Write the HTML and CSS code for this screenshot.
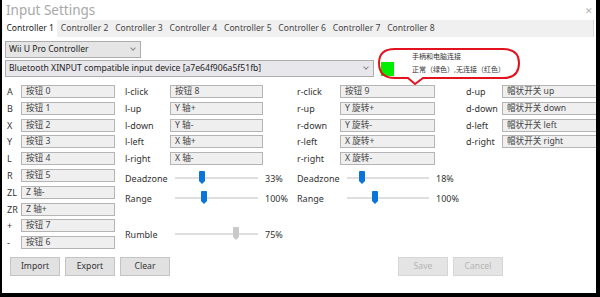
FILE: index.html
```html
<!DOCTYPE html>
<html lang="zh">
<head>
    <meta charset="UTF-8">
    <title>Input Settings</title>
    <link rel="stylesheet" href="styles.css">
</head>
<body>

<div class="window">
    <div class="titlebar">
        <span class="title">Input Settings</span>
        <span class="close">&#x2715;</span>
    </div>

    <!-- controller tabs -->
    <div class="tabs">
        <span class="tab active">Controller 1</span>
        <span class="tab">Controller 2</span>
        <span class="tab">Controller 3</span>
        <span class="tab">Controller 4</span>
        <span class="tab">Controller 5</span>
        <span class="tab">Controller 6</span>
        <span class="tab">Controller 7</span>
        <span class="tab">Controller 8</span>
    </div>

    <div class="content">
        <div class="select type-select">Wii U Pro Controller<span class="chevron"></span></div>
        <div class="device-row">
            <div class="select device-select">Bluetooth XINPUT compatible input device [a7e64f906a5f51fb]<span class="chevron"></span></div>
            <span class="status"></span>
        </div>

        <div class="mapping">
            <!-- buttons -->
            <div class="buttons-col">
                <label>A</label><div class="field">按钮 0</div>
                <label>B</label><div class="field">按钮 1</div>
                <label>X</label><div class="field">按钮 2</div>
                <label>Y</label><div class="field">按钮 3</div>
                <label>L</label><div class="field">按钮 4</div>
                <label>R</label><div class="field">按钮 5</div>
                <label>ZL</label><div class="field">Z 轴-</div>
                <label>ZR</label><div class="field">Z 轴+</div>
                <label>+</label><div class="field">按钮 7</div>
                <label>-</label><div class="field">按钮 6</div>
            </div>

            <div class="right-area">
                <!-- sticks and d-pad -->
                <div class="sticks">
                    <label>l-click</label><div class="field">按钮 8</div>
                    <label class="gap-r">r-click</label><div class="field">按钮 9</div>
                    <label class="gap-d">d-up</label><div class="field">帽状开关 up</div>

                    <label>l-up</label><div class="field">Y 轴+</div>
                    <label class="gap-r">r-up</label><div class="field">Y 旋转+</div>
                    <label class="gap-d">d-down</label><div class="field">帽状开关 down</div>

                    <label>l-down</label><div class="field">Y 轴-</div>
                    <label class="gap-r">r-down</label><div class="field">Y 旋转-</div>
                    <label class="gap-d">d-left</label><div class="field">帽状开关 left</div>

                    <label>l-left</label><div class="field">X 轴+</div>
                    <label class="gap-r">r-left</label><div class="field">X 旋转+</div>
                    <label class="gap-d">d-right</label><div class="field">帽状开关 right</div>

                    <label>l-right</label><div class="field">X 轴-</div>
                    <label class="gap-r">r-right</label><div class="field">X 旋转-</div>
                </div>

                <!-- sliders -->
                <div class="sliders">
                    <label>Deadzone</label>
                    <div class="slider"><span class="thumb" style="left: 33%"></span></div>
                    <span class="value">33%</span>
                    <label>Deadzone</label>
                    <div class="slider"><span class="thumb" style="left: 18%"></span></div>
                    <span class="value">18%</span>

                    <label>Range</label>
                    <div class="slider"><span class="thumb" style="left: 35%"></span></div>
                    <span class="value">100%</span>
                    <label>Range</label>
                    <div class="slider"><span class="thumb" style="left: 34%"></span></div>
                    <span class="value">100%</span>

                    <label class="rumble">Rumble</label>
                    <div class="slider"><span class="thumb disabled" style="left: 73%"></span></div>
                    <span class="value">75%</span>
                </div>
            </div>
        </div>

        <div class="actions">
            <button>Import</button>
            <button>Export</button>
            <button>Clear</button>
            <span class="spacer"></span>
            <button disabled>Save</button>
            <button disabled>Cancel</button>
        </div>
    </div>

    <!-- 标注 -->
    <div class="note">
        <svg class="note-outline" width="148" height="42" viewBox="0 0 148 42">
            <path d="M20 2 H128 Q144 2 144 16 Q144 31 128 31 H48 L40 37 L33 31 H20 Q4 31 4 16 Q4 2 20 2 Z" fill="none" stroke="#e3121e" stroke-width="2"/>
        </svg>
        <div class="note-line">手柄和电脑连接</div>
        <div class="note-line">正常（绿色）,无连接（红色）</div>
    </div>
</div>

</body>
</html>
```

FILE: styles.css
```css
body {
    margin: 0;
    background: #000;
    font-family: "Noto Sans", "Noto Sans CJK SC", sans-serif;
    font-size: 9px;
    color: #333;
}
.window {
    position: relative;
    width: 594px;
    height: 293px;
    margin-left: 2px;
    background: #fff;
    overflow: hidden;
}
.titlebar {
    display: flex;
    justify-content: space-between;
    align-items: center;
    height: 20px;
    padding: 0 3px 0 4px;
}
.title {
    font-size: 13.5px;
    color: #a8a8a8;
}
.close {
    font-size: 9px;
    color: #b0b0b0;
}
.tabs {
    display: flex;
    height: 17px;
    background: #f0f0f0;
    border-right: 1px solid #dcdcdc;
    margin-right: 2px;
}
.tab {
    padding: 0 3.4px;
    line-height: 17px;
    font-size: 8.6px;
    color: #444;
}
.tab.active {
    background: #fff;
    color: #222;
    margin-left: 1px;
}
.content {
    padding: 4px 0 0 3px;
}
.select {
    position: relative;
    height: 15px;
    line-height: 15px;
    padding-left: 3px;
    background: #e5e5e5;
    border: 1px solid #adadad;
    font-size: 8.6px;
    color: #222;
}
.type-select {
    width: 131px;
}
.device-row {
    display: flex;
    align-items: center;
    gap: 7px;
    margin-top: 2px;
}
.device-select {
    width: 364px;
    background: #e8e8ec;
}
.chevron {
    position: absolute;
    right: 5px;
    top: 4px;
    width: 3px;
    height: 3px;
    border-right: 1px solid #888;
    border-bottom: 1px solid #888;
    transform: rotate(45deg);
}
.status {
    width: 13px;
    height: 14px;
    background: #00ee00;
}
.mapping {
    display: flex;
    margin-top: 8px;
}
.buttons-col {
    display: grid;
    grid-template-columns: 14px 94px;
    grid-auto-rows: 16.8px;
    align-items: start;
    flex-shrink: 0;
    padding-left: 2px;
    width: 118px;
}
label {
    line-height: 13px;
    color: #333;
    white-space: nowrap;
}
.field {
    height: 11px;
    line-height: 11px;
    padding-left: 4px;
    background: #efefef;
    border: 1px solid #b4b4b4;
    font-size: 8.6px;
    color: #444;
    white-space: nowrap;
    overflow: hidden;
}
.right-area {
    flex: 1;
    min-width: 0;
}
.sticks {
    display: grid;
    grid-template-columns: 45px 93px 77px 95px 67px 100px;
    grid-auto-rows: 16.8px;
    align-items: start;
}
.gap-r {
    padding-left: 34px;
}
.gap-d {
    padding-left: 31px;
}
.sliders {
    display: grid;
    grid-template-columns: 50px 83px 39px 50px 82px 50px;
    grid-template-rows: 20px 20px 20px;
    align-items: center;
    margin-top: -0.5px;
}
.sliders .value {
    padding-left: 7px;
}
.sliders .rumble,
.sliders .rumble ~ * {
    margin-top: 32px;
}
.slider {
    position: relative;
    height: 2px;
    background: #dedede;
}
.thumb {
    position: absolute;
    top: -6px;
    width: 6px;
    height: 10px;
    margin-left: -3px;
    background: #0a74d8;
    border-radius: 1px 1px 0 0;
}
.thumb::after {
    content: "";
    position: absolute;
    left: 0;
    top: 10px;
    border-left: 3px solid transparent;
    border-right: 3px solid transparent;
    border-top: 3px solid #0a74d8;
}
.thumb.disabled {
    background: #c9c9c9;
}
.thumb.disabled::after {
    border-top-color: #c9c9c9;
}
.actions {
    display: flex;
    gap: 5px;
    margin-top: 4px;
    padding: 0 93px 0 5px;
}
.spacer {
    flex: 1;
}
button {
    width: 50px;
    height: 19px;
    padding: 0;
    font-family: inherit;
    font-size: 8.6px;
    color: #333;
    background: #e1e1e1;
    border: 1px solid #c4c4c4;
}
button:disabled {
    color: #b4b4b4;
    background: #e4e4e4;
    border-color: #d6d6d6;
}
.note {
    position: absolute;
    left: 373px;
    top: 47px;
    width: 148px;
    height: 42px;
}
.note-outline {
    position: absolute;
    left: 0;
    top: 0;
}
.note-line {
    position: relative;
    padding-left: 37px;
    font-size: 7px;
    line-height: 13px;
    color: #333;
}
.note-line:first-of-type {
    margin-top: 3px;
}
```
